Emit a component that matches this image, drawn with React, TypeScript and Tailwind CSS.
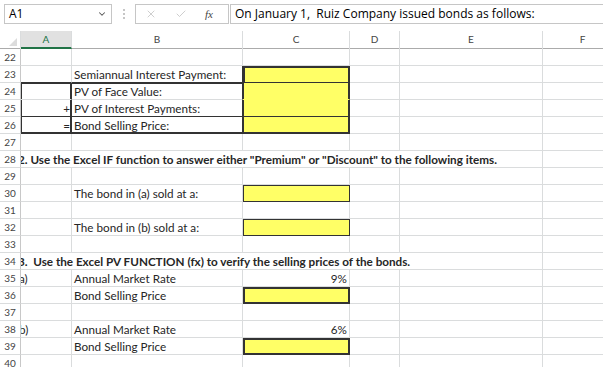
import { ChevronDown, X, Check } from 'lucide-react'

type Cell = {
  text?: string
  cls?: string
  inner?: string
}

const YEL = 'bg-[#ffff66]'
const GRID = 'border-r border-b border-[#dadcdd]'

const cols = ['A', 'B', 'C', 'D', 'E', 'F']

function GridRow({ num, cells, full }: { num: number; cells?: Cell[]; full?: React.ReactNode }) {
  return (
    <div className="grid grid-cols-[21px_51px_171px_107px_50px_143px_80px] h-[17px]">
      <div className="border-r border-b border-[#c8c8c8] border-b-[#dadcdd] text-[10px] leading-[16px] text-[#444] text-center">
        {num}
      </div>
      {full}
      {!full &&
        cols.map((c, i) => {
          const cell = cells?.[i] ?? {}
          return (
            <div key={c} className={`${GRID} overflow-hidden whitespace-nowrap leading-[16px] ${cell.cls ?? ''}`}>
              {cell.text && <span className={cell.inner ?? 'pl-[2px]'}>{cell.text}</span>}
            </div>
          )
        })}
    </div>
  )
}

export default function App() {
  const blank: Cell[] = []
  return (
    <div className="w-[603px] h-[367px] overflow-hidden bg-white text-[#262626] font-['Lato','Liberation_Sans',sans-serif] text-[11.7px]">
      {/* formula bar */}
      <div className="h-[31px] flex items-start pt-[4px] font-['Open_Sans','Liberation_Sans',sans-serif]">
        <div className="ml-[4px] w-[108px] h-[20px] border border-[#c6c6c6] flex items-center justify-between pl-[4px] pr-[4px] text-[12px] text-black">
          <span>A1</span>
          <ChevronDown size={10} strokeWidth={2.5} className="text-[#555]" />
        </div>
        <div className="w-[23px] h-[20px] flex flex-col items-center justify-center gap-[2px]">
          <span className="w-[2px] h-[2px] bg-[#c6c6c6]" />
          <span className="w-[2px] h-[2px] bg-[#c6c6c6]" />
          <span className="w-[2px] h-[2px] bg-[#c6c6c6]" />
        </div>
        <div className="w-[94px] h-[20px] border border-[#c6c6c6] flex items-center pl-[9px] gap-[18px]">
          <X size={12} strokeWidth={1.5} className="text-[#bdbdbd]" />
          <Check size={12} strokeWidth={1.5} className="text-[#bdbdbd]" />
          <span className="italic font-['Liberation_Serif',serif] text-[11px] text-[#444]">fx</span>
        </div>
        <div className="flex-1 h-[20px] ml-[1px] border border-r-0 border-[#c6c6c6] flex items-center pl-[4px] text-[12px] text-black whitespace-nowrap">
          On January 1,&nbsp; Ruiz Company issued bonds as follows:
        </div>
      </div>

      {/* column headers */}
      <div className="grid grid-cols-[21px_51px_171px_107px_50px_143px_80px] h-[18px] border-b border-[#ababab] text-[10px] text-[#444] leading-[16px]">
        <div className="border-r border-[#dadcdd] flex items-end justify-end pr-[3px] pb-[3px]">
          <div className="w-0 h-0 border-l-[8px] border-l-transparent border-b-[8px] border-b-[#dcdcdc]" />
        </div>
        {cols.map((c) => (
          <div
            key={c}
            className={`border-r border-[#dadcdd] text-center ${c === 'A' ? 'bg-[#e1e1e1] border-b-2 border-b-[#217346] text-[#217346]' : ''}`}
          >
            {c}
          </div>
        ))}
      </div>

      <GridRow num={22} cells={blank} />
      <GridRow
        num={23}
        cells={[
          { cls: 'border-b-[#333]' },
          { text: 'Semiannual Interest Payment:', cls: 'border-b-[#333] border-r-[#333]' },
          { cls: `${YEL} border-r-[#333] border-b-[#333] shadow-[inset_2px_2px_0_#333,inset_-1px_0_0_#333]` },
        ]}
      />
      <GridRow
        num={24}
        cells={[
          { cls: 'border-r-[#333] shadow-[inset_1px_1px_0_#333,inset_-1px_0_0_#333]' },
          { text: 'PV of Face Value:', cls: 'border-r-[#333] shadow-[inset_0_1px_0_#333]' },
          { cls: `${YEL} border-r-[#333] border-b-[#ffff66] shadow-[inset_1px_0_0_#333,inset_-1px_0_0_#333]` },
        ]}
      />
      <GridRow
        num={25}
        cells={[
          { text: '+', cls: 'text-right border-r-[#333] border-b-[#333] shadow-[inset_1px_0_0_#333,inset_-1px_0_0_#333]', inner: 'pr-[1px]' },
          { text: 'PV of Interest Payments:', cls: 'border-r-[#333] border-b-[#333]' },
          { cls: `${YEL} border-r-[#333] border-b-[#333] shadow-[inset_1px_0_0_#333,inset_-1px_0_0_#333]` },
        ]}
      />
      <GridRow
        num={26}
        cells={[
          { text: '=', cls: 'text-right border-r-[#333] border-b-[#333] shadow-[inset_1px_0_0_#333,inset_-1px_-1px_0_#333]', inner: 'pr-[1px]' },
          { text: 'Bond Selling Price:', cls: 'border-r-[#333] border-b-[#333] shadow-[inset_0_-1px_0_#333]' },
          { cls: `${YEL} border-r-[#333] border-b-[#333] shadow-[inset_1px_0_0_#333,inset_-1px_-1px_0_#333]` },
        ]}
      />
      <GridRow num={27} cells={blank} />
      <GridRow
        num={28}
        full={
          <>
            <div className="col-span-5 border-r border-b border-[#dadcdd] overflow-hidden whitespace-nowrap leading-[16px] font-bold">
              <span className="-ml-[3px] inline-block">2. Use the Excel IF function to answer either "Premium" or "Discount" to the following items.</span>
            </div>
            <div className={GRID} />
          </>
        }
      />
      <GridRow num={29} cells={blank} />
      <GridRow
        num={30}
        cells={[
          {},
          { text: 'The bond in (a) sold at a:' },
          { cls: `${YEL} border-r-[#333] border-b-[#333] shadow-[inset_1px_1px_0_#333]` },
        ]}
      />
      <GridRow num={31} cells={blank} />
      <GridRow
        num={32}
        cells={[
          {},
          { text: 'The bond in (b) sold at a:' },
          { cls: `${YEL} border-r-[#333] border-b-[#333] shadow-[inset_1px_1px_0_#333]` },
        ]}
      />
      <GridRow num={33} cells={blank} />
      <GridRow
        num={34}
        full={
          <>
            <div className="col-span-5 border-r border-b border-[#dadcdd] overflow-hidden whitespace-nowrap leading-[16px] font-bold">
              <span className="-ml-[3px] inline-block">3.&nbsp; Use the Excel PV FUNCTION (fx) to verify the selling prices of the bonds.</span>
            </div>
            <div className={GRID} />
          </>
        }
      />
      <GridRow
        num={35}
        cells={[
          { text: 'a)', inner: '-ml-[2px] inline-block' },
          { text: 'Annual Market Rate' },
          { text: '9%', cls: 'text-right', inner: 'pr-[2px]' },
        ]}
      />
      <GridRow
        num={36}
        cells={[
          {},
          { text: 'Bond Selling Price' },
          { cls: `${YEL} border-r-[#333] border-b-[#333] shadow-[inset_2px_2px_0_#333,inset_-1px_-1px_0_#333]` },
        ]}
      />
      <GridRow num={37} cells={blank} />
      <GridRow
        num={38}
        cells={[
          { text: 'b)', inner: '-ml-[2px] inline-block' },
          { text: 'Annual Market Rate' },
          { text: '6%', cls: 'text-right', inner: 'pr-[2px]' },
        ]}
      />
      <GridRow
        num={39}
        cells={[
          {},
          { text: 'Bond Selling Price' },
          { cls: `${YEL} border-r-[#333] border-b-[#333] shadow-[inset_2px_2px_0_#333,inset_-1px_-1px_0_#333]` },
        ]}
      />
      <GridRow num={40} cells={blank} />
    </div>
  )
}
